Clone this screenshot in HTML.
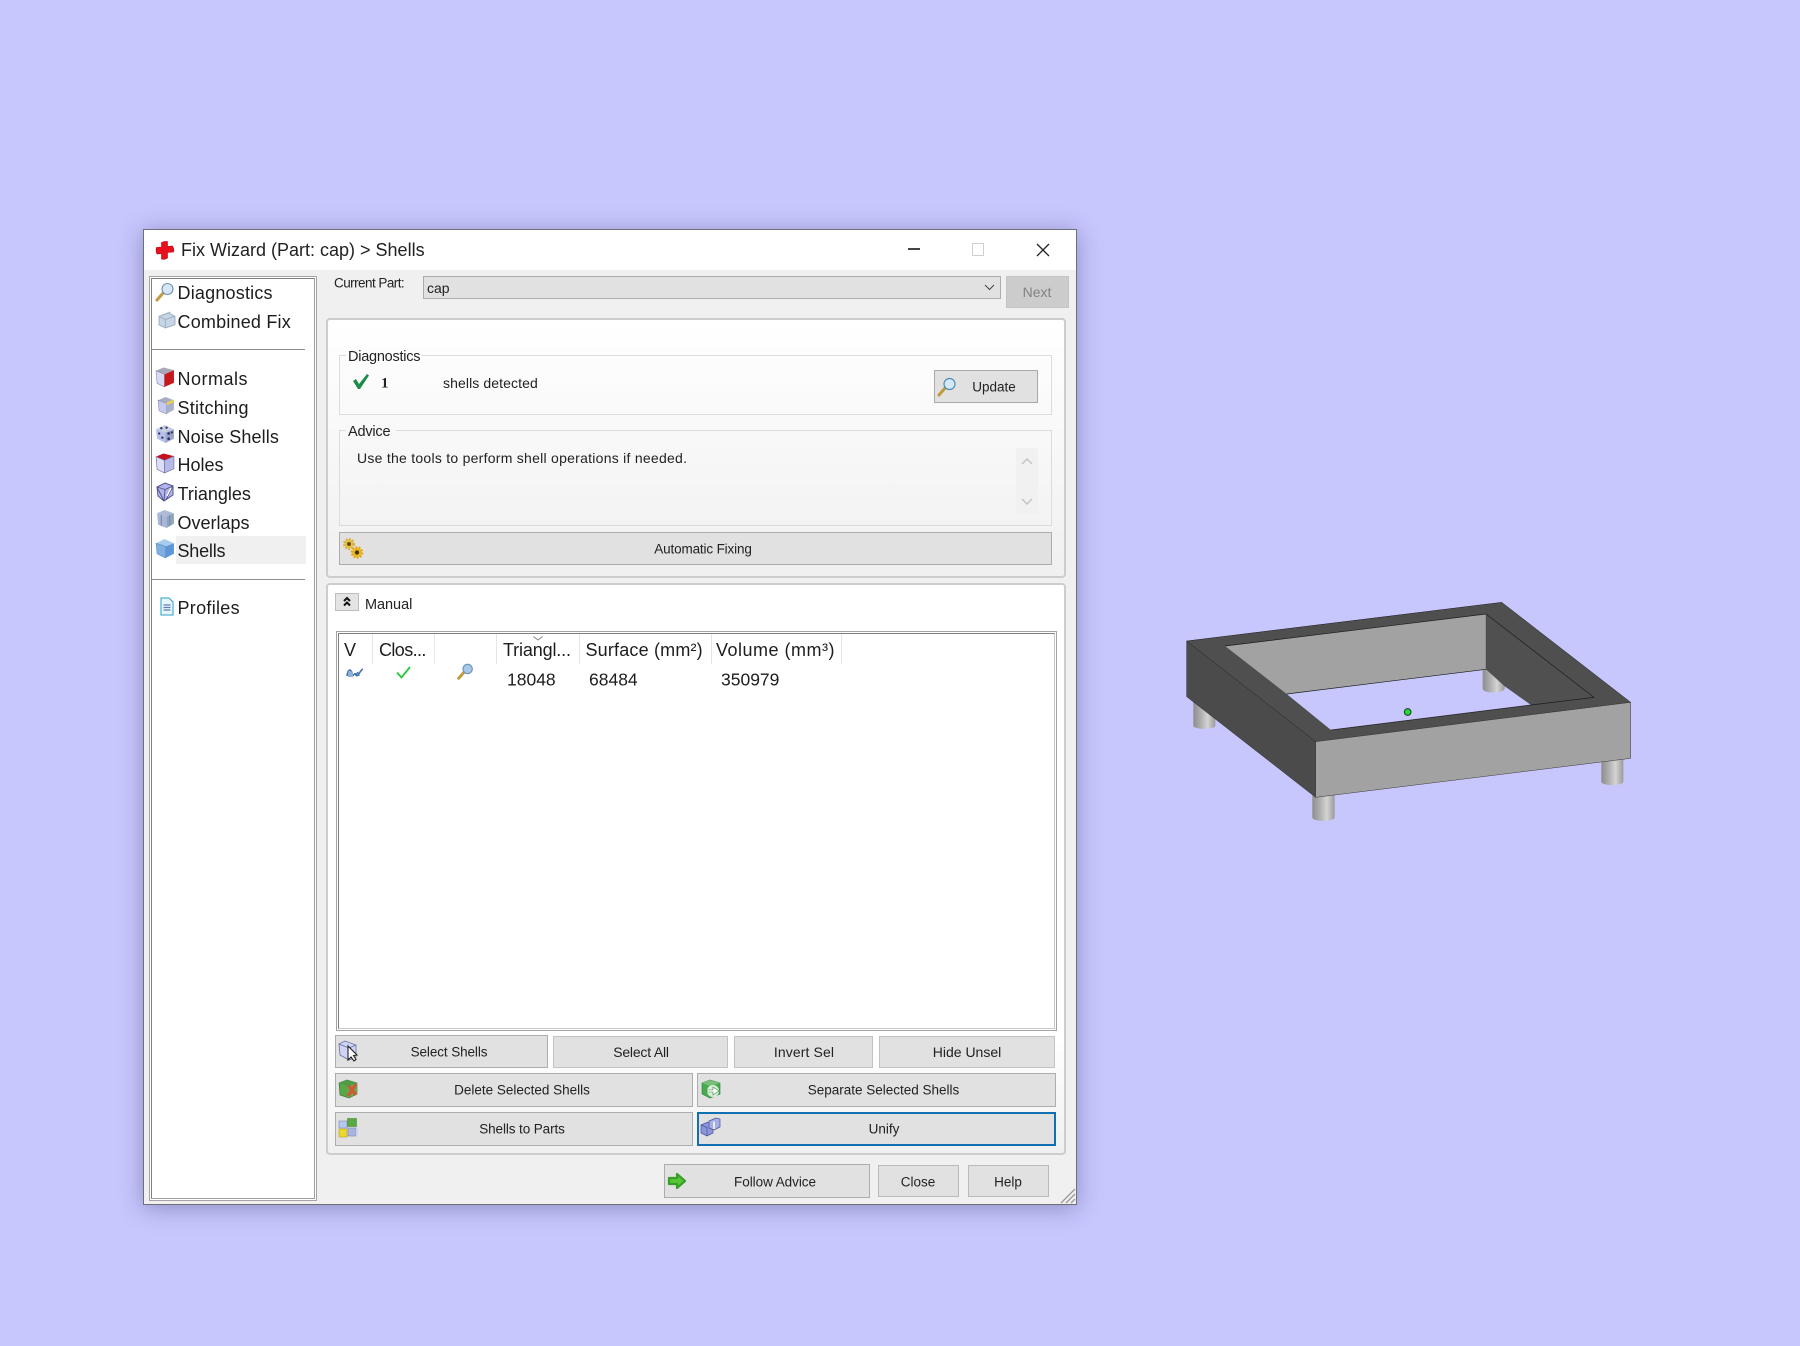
<!DOCTYPE html>
<html><head><meta charset="utf-8"><title>Fix Wizard</title>
<style>
html,body{margin:0;padding:0;width:1800px;height:1346px;overflow:hidden;background:#c7c7fe;font-family:"Liberation Sans",sans-serif;color:#222}
.a{position:absolute;box-sizing:border-box}
.t{position:absolute;white-space:nowrap;line-height:1;transform:translateY(-50%)}
.c{position:absolute;white-space:nowrap;line-height:1;transform:translate(-50%,-50%)}
.s{font-size:18px;color:#1d1d1d}
.m{font-size:14px}
.b{position:absolute;box-sizing:border-box;background:#e1e1e1;border:1px solid #adadad}
.g{position:absolute;box-sizing:border-box;border:1px solid #dcdcdc}
.p{position:absolute;box-sizing:border-box;border:2px solid #cdcdcd;border-radius:4px;background:linear-gradient(#fff,#f0f0f0)}
svg.i{position:absolute;overflow:visible}
.sep{position:absolute;top:634px;width:1px;height:30px;background:#e6e6e6}
</style></head><body>

<!-- window -->
<div class="a" style="left:143px;top:229px;width:934px;height:976px;background:#f0f0f0;border:1px solid #6f6f78;box-shadow:0 3px 22px rgba(40,40,90,.36)"></div>
<div class="a" style="left:144px;top:230px;width:932px;height:40px;background:#fff"></div>

<!-- title -->
<svg class="i" style="left:155px;top:240px" width="20" height="20" viewBox="0 0 19 20"><path d="M6 2.500Q9 1 12 1.500V6.500L17 6Q19 9 18 12L12 12.500V18Q9 20 6 19V13.500L1.500 14Q0 11 1 7.500L6 7z" fill="#e8101a" stroke="#c00010" stroke-width=".6"/></svg>
<div class="t" style="left:181px;top:250px;font-size:18px;color:#222">Fix Wizard (Part: cap) &gt; Shells</div>
<div class="a" style="left:908px;top:248px;width:12px;height:2px;background:#444"></div>
<div class="a" style="left:972px;top:243px;width:12px;height:13px;border:1px solid #d0d0d0"></div>
<svg class="i" style="left:1036px;top:243px" width="14" height="14"><path d="M1 1L13 13M13 1L1 13" stroke="#222" stroke-width="1.300" fill="none"/></svg>

<!-- sidebar -->
<div class="a" style="left:149px;top:276px;width:168px;height:925px;background:#fff;border:1px solid #a4a4a4"></div>
<div class="a" style="left:151px;top:278px;width:164px;height:921px;background:#fff;border:1px solid;border-color:#808080 #a0a0a0 #a0a0a0 #808080"></div>
<div class="a" style="left:152px;top:349px;width:153px;height:1px;background:#8c8c8c"></div>
<div class="a" style="left:152px;top:579px;width:153px;height:1px;background:#8c8c8c"></div>
<div class="a" style="left:176px;top:536px;width:130px;height:28px;background:#f0f0f0"></div>

<div class="t s" style="left:177.500px;top:293px;letter-spacing:.2px">Diagnostics</div>
<div class="t s" style="left:177.500px;top:322px;letter-spacing:.2px">Combined Fix</div>
<div class="t s" style="left:177.500px;top:379px;letter-spacing:.5px">Normals</div>
<div class="t s" style="left:177.500px;top:408px;letter-spacing:.25px">Stitching</div>
<div class="t s" style="left:177.500px;top:436.500px;letter-spacing:.12px">Noise Shells</div>
<div class="t s" style="left:177.500px;top:465px">Holes</div>
<div class="t s" style="left:177.500px;top:494px">Triangles</div>
<div class="t s" style="left:177.500px;top:522.500px">Overlaps</div>
<div class="t s" style="left:177.500px;top:551px;letter-spacing:-.2px">Shells</div>
<div class="t s" style="left:177.500px;top:608px;letter-spacing:.3px">Profiles</div>

<!-- sidebar icons -->
<svg class="i" style="left:155px;top:282px" width="20" height="20" viewBox="0 0 20 20"><path d="M2 18L9 10" stroke="#c29c44" stroke-width="3" stroke-linecap="round"/><circle cx="12.500" cy="7" r="5.500" fill="#d6e8f8" stroke="#6e90ae" stroke-width="1.100"/></svg>
<svg class="i" style="left:158px;top:311px" width="18" height="18" viewBox="0 0 17 17"><path d="M1 5L10 2L16 5V13L7 16L1 13z" fill="#c6d6e6" stroke="#a0b2c4"/><path d="M1 5L7 8V16M7 8L16 5" stroke="#a0b2c4" fill="none"/><path d="M4 3.500L12 1" stroke="#aebccb"/></svg>

<svg class="i" style="left:155px;top:367px" width="20" height="20" viewBox="0 0 19 19"><path d="M1 3.500L8 .5L18 3L9 7z" fill="#a8a8b8"/><path d="M1 3.500L9 7V19L2 15.500z" fill="#d9dbf6" stroke="#8a8bac" stroke-width=".6"/><path d="M9 7L18 3V15L9 19z" fill="#c8181c"/></svg>
<svg class="i" style="left:157px;top:396px" width="18" height="19" viewBox="0 0 17 18"><path d="M1 4L8 1L16 4L9 7z" fill="#a8acc4"/><path d="M1 4L9 7V17L2 14z" fill="#c6caf2" stroke="#8a8bac" stroke-width=".6"/><path d="M9 7L16 4V13L9 17z" fill="#aab1c8"/><path d="M9 7.500L16 4.500" stroke="#ecd24a" stroke-width="2.200"/></svg>
<svg class="i" style="left:155px;top:424px" width="20" height="20" viewBox="0 0 19 19"><path d="M1 5L9 1L18 5L10 8z" fill="#c9cde0"/><path d="M1 5L10 8V18L2 14z" fill="#b9c0e8"/><path d="M10 8L18 5V14L10 18z" fill="#9aa5c9"/><g fill="#2c3560"><circle cx="6" cy="4" r="1.100"/><circle cx="11" cy="3.500" r="1.100"/><circle cx="4" cy="9" r="1.100"/><circle cx="7" cy="13" r="1.100"/><circle cx="13" cy="9" r="1.300"/><circle cx="16" cy="8" r="1.100"/><circle cx="13" cy="14" r="1.300"/></g></svg>
<svg class="i" style="left:155px;top:453px" width="20" height="20" viewBox="0 0 19 19"><path d="M1 3.500L8 .5L18 3L9 7z" fill="#c8101c"/><path d="M1 3.500L9 7V19L2 15.500z" fill="#dcddf9" stroke="#6e6f96" stroke-width=".6"/><path d="M9 7L18 3V15L9 19z" fill="#b6baea" stroke="#6e6f96" stroke-width=".6"/></svg>
<svg class="i" style="left:156px;top:482px" width="18" height="20" viewBox="0 0 18 20"><path d="M1 5L9 1L17 4V13L8 19L2 14z" fill="#b2b4ea" stroke="#50548c"/><path d="M1 5L9 7.500L17 4M9 7.500L8 19M1 5L8 19M17 4L10 18" stroke="#50548c" fill="none" stroke-width=".9"/><path d="M11 14L15 6" stroke="#fff" stroke-width="1.300"/></svg>
<svg class="i" style="left:156px;top:509px" width="19" height="20" viewBox="0 0 18 19"><path d="M1 4L8 1L17 4L10 7z" fill="#aebbd4"/><path d="M1 4L10 7V18L2 15z" fill="#a9b5d9"/><path d="M10 7L17 4V14L10 18z" fill="#8fa6bb"/><path d="M5 5.500V16M13 5.500V16" stroke="#7788a8"/></svg>
<svg class="i" style="left:155px;top:538px" width="20" height="21" viewBox="0 0 19 20"><path d="M1 5L9 1L18 5L10 8z" fill="#a8ccec"/><path d="M1 5L10 8V19L2 15z" fill="#7fb0e2" stroke="#5d8fc4" stroke-width=".6"/><path d="M10 8L18 5V15L10 19z" fill="#5f97d6"/></svg>
<svg class="i" style="left:160px;top:597px" width="14" height="19" viewBox="0 0 14 19"><path d="M1 1H9L13 5V18H1z" fill="#e8f6fc" stroke="#2aa0c4"/><path d="M3.500 8H10.500M3.500 10.500H10.500M3.500 13H10.500" stroke="#5d7db4" stroke-width="1.300"/></svg>

<!-- current part -->
<div class="t" style="left:334px;top:283px;font-size:13.500px;letter-spacing:-.55px">Current Part:</div>
<div class="b" style="left:423px;top:276px;width:578px;height:23px"></div>
<div class="t m" style="left:427px;top:287.500px">cap</div>
<svg class="i" style="left:984px;top:284px" width="11" height="7"><path d="M1 1L5.500 5.500L10 1" stroke="#444" fill="none"/></svg>
<div class="b" style="left:1006px;top:276px;width:63px;height:32px;background:#ccc;border-color:#c4c4c4"></div>
<div class="c" style="left:1037px;top:292px;font-size:14px;color:#838383">Next</div>

<!-- panel 1 -->
<div class="p" style="left:326px;top:318px;width:740px;height:260px"></div>
<div class="g" style="left:339px;top:355px;width:713px;height:60px"></div>
<div class="a" style="left:346px;top:350px;width:76px;height:10px;background:#fdfdfd"></div>
<div class="t" style="left:348px;top:357px;font-size:14.500px;letter-spacing:-.25px">Diagnostics</div>
<svg class="i" style="left:352px;top:373px" width="18" height="17" viewBox="0 0 18 17"><path d="M1 8L4 6L7 11L15 1L17 2.500L8 16H6z" fill="#1f8a4a"/></svg>
<div class="t" style="left:381px;top:384px;font-size:15px;font-weight:bold;font-family:'Liberation Serif',serif">1</div>
<div class="t m" style="left:443px;top:383px;letter-spacing:.1px">shells detected</div>
<div class="b" style="left:934px;top:370px;width:104px;height:33px;border-color:#a9a9a9"></div>
<svg class="i" style="left:937px;top:377px" width="20" height="20" viewBox="0 0 20 20"><path d="M2 18L9 10" stroke="#c09a3c" stroke-width="3" stroke-linecap="round"/><circle cx="12.500" cy="7" r="5.500" fill="#d4e8f8" stroke="#4f8bb4" stroke-width="1.200"/></svg>
<div class="c" style="left:994px;top:387px;font-size:13.500px">Update</div>

<div class="g" style="left:339px;top:430px;width:713px;height:96px"></div>
<div class="a" style="left:346px;top:425px;width:50px;height:10px;background:#f8f8f8"></div>
<div class="t" style="left:348px;top:431.500px;font-size:14.500px;letter-spacing:-.2px">Advice</div>
<div class="t" style="left:357px;top:458px;font-size:14px;letter-spacing:.26px">Use the tools to perform shell operations if needed.</div>
<div class="a" style="left:1016px;top:448px;width:22px;height:66px;background:#f1f1f1"></div>
<svg class="i" style="left:1021px;top:458px" width="12" height="8"><path d="M1 6L6 1L11 6" stroke="#c4c4c4" stroke-width="1.500" fill="none"/></svg>
<svg class="i" style="left:1021px;top:498px" width="12" height="8"><path d="M1 1L6 6L11 1" stroke="#c4c4c4" stroke-width="1.500" fill="none"/></svg>

<div class="b" style="left:339px;top:532px;width:713px;height:33px"></div>
<svg class="i" style="left:342px;top:537px" width="22" height="23" viewBox="0 0 22 23"><circle cx="7" cy="7" r="4.500" fill="#e8c848" stroke="#d8b040" stroke-width="3" stroke-dasharray="1.800 1.200"/><circle cx="7" cy="7" r="2" fill="#6a4a10"/><circle cx="15" cy="15.500" r="4.800" fill="#f0c020" stroke="#e2a818" stroke-width="3" stroke-dasharray="1.800 1.200"/><circle cx="15" cy="15.500" r="2.200" fill="#4a3008"/></svg>
<div class="c" style="left:703px;top:549px;font-size:13.500px;letter-spacing:-.15px">Automatic Fixing</div>

<!-- panel 2 -->
<div class="p" style="left:326px;top:583px;width:740px;height:572px;background:linear-gradient(#fff 0,#fff 80%,#f0f0f0 100%)"></div>
<div class="b" style="left:335px;top:593px;width:24px;height:18px;background:#e4e4e4;border-color:#bdbdbd"></div>
<svg class="i" style="left:342px;top:596px" width="10" height="11"><path d="M2 5L5 2L8 5M2 9.500L5 6.500L8 9.500" stroke="#111" stroke-width="2" fill="none"/></svg>
<div class="t" style="left:365px;top:605px;font-size:14.500px;letter-spacing:-.05px">Manual</div>

<!-- table -->
<div class="a" style="left:336px;top:631px;width:721px;height:400px;background:#fff;border:1px solid #a4a4a4"></div>
<div class="a" style="left:338px;top:633px;width:717px;height:396px;border:1px solid;border-color:#808080 #c8c8c8 #c8c8c8 #808080"></div>
<div class="sep" style="left:372px"></div><div class="sep" style="left:434px"></div><div class="sep" style="left:496px"></div><div class="sep" style="left:579px"></div><div class="sep" style="left:711px"></div><div class="sep" style="left:841px"></div>
<svg class="i" style="left:533px;top:636px" width="10" height="5"><path d="M.5 .5L5 4L9.500 .5" stroke="#888" fill="none"/></svg>
<div class="t s" style="left:344px;top:650px">V</div>
<div class="t s" style="left:379px;top:650px;letter-spacing:-.6px">Clos...</div>
<div class="t s" style="left:503px;top:650px;letter-spacing:-.15px">Triangl...</div>
<div class="t s" style="left:585.500px;top:650px;letter-spacing:.18px">Surface (mm²)</div>
<div class="t s" style="left:716px;top:650px;letter-spacing:.5px">Volume (mm³)</div>
<div class="t s" style="left:507px;top:680px;font-size:17.500px">18048</div>
<div class="t s" style="left:589px;top:680px;font-size:17.500px">68484</div>
<div class="t s" style="left:721px;top:680px;font-size:17.500px">350979</div>
<svg class="i" style="left:346px;top:667px" width="18" height="12" viewBox="0 0 18 12"><path d="M1 9C2 2 5 1 6 7C7 11 9 4 10 8C12 11 14 3 17 2" stroke="#3f72ac" stroke-width="1.600" fill="none"/><path d="M2 4.500H7V10H2z" fill="#8fb0d8"/><path d="M10 9C11 5 12 4 13 9" stroke="#3f72ac" stroke-width="1.200" fill="none"/></svg>
<svg class="i" style="left:396px;top:666px" width="15" height="13"><path d="M1 6.500L5.500 11.500L14 1" stroke="#28c83c" stroke-width="1.800" fill="none"/></svg>
<svg class="i" style="left:457px;top:663px" width="17" height="17" viewBox="0 0 20 20"><path d="M2 18L9 10" stroke="#c09a3c" stroke-width="3.500" stroke-linecap="round"/><circle cx="12.500" cy="7" r="5.500" fill="#a8c8e8" stroke="#6c94b8" stroke-width="1.400"/></svg>

<!-- buttons -->
<div class="b" style="left:335px;top:1035px;width:213px;height:33px"></div>
<div class="c m" style="left:449px;top:1051.500px;font-size:13.500px;letter-spacing:-.1px">Select Shells</div>
<div class="b" style="left:553px;top:1036px;width:175px;height:32px;border-color:#c2c2c2"></div>
<div class="c m" style="left:641px;top:1052px;letter-spacing:-.2px">Select All</div>
<div class="b" style="left:734px;top:1036px;width:139px;height:32px;border-color:#c2c2c2"></div>
<div class="c m" style="left:804px;top:1052px;letter-spacing:.1px">Invert Sel</div>
<div class="b" style="left:879px;top:1036px;width:176px;height:32px;border-color:#c2c2c2"></div>
<div class="c m" style="left:967px;top:1052px">Hide Unsel</div>

<div class="b" style="left:335px;top:1073px;width:358px;height:34px"></div>
<div class="c m" style="left:522px;top:1090px;font-size:13.500px">Delete Selected Shells</div>
<div class="b" style="left:697px;top:1073px;width:359px;height:34px"></div>
<div class="c m" style="left:883.500px;top:1090px;font-size:13.500px">Separate Selected Shells</div>
<div class="b" style="left:335px;top:1112px;width:358px;height:34px"></div>
<div class="c m" style="left:522px;top:1129px;font-size:13.500px;letter-spacing:-.1px">Shells to Parts</div>
<div class="b" style="left:697px;top:1112px;width:359px;height:34px;border:2px solid #1070b4"></div>
<div class="c m" style="left:884px;top:1129px;font-size:13.500px">Unify</div>

<svg class="i" style="left:338px;top:1040px" width="21" height="22" viewBox="0 0 21 22"><path d="M1 4L7 1L18 5V17L11 20L2 15z" fill="#cfd4f6" stroke="#6a6f9c" stroke-width=".8"/><path d="M1 4L11 8V20M11 8L18 5" stroke="#6a6f9c" fill="none" stroke-width=".8"/><path d="M10 6V20L13 17L16 21L18 19.500L15.500 15.500L19 15z" fill="#fff" stroke="#222" stroke-width="1.100"/></svg>
<svg class="i" style="left:338px;top:1079px" width="20" height="20" viewBox="0 0 20 20"><path d="M1 4L9 1L19 4V15L11 19L2 16z" fill="#58a848" stroke="#3a6a38" stroke-width=".6"/><path d="M9 8L19 4V15L10 19z" fill="#6ea84e"/><path d="M10 6L18 16M18 5L10 17" stroke="#cc5a34" stroke-width="3.200"/><path d="M1 4L9 7L19 4L9 1z" fill="#4e9c48"/></svg>
<svg class="i" style="left:701px;top:1079px" width="20" height="20" viewBox="0 0 20 20"><path d="M1 4L9 1L19 4V15L9 19L1 15z" fill="#48aa50" stroke="#2e8038" stroke-width=".6"/><path d="M1 4L9 7L19 4L9 1z" fill="#78c078"/><circle cx="12" cy="12" r="6" fill="#d8ecd8"/><path d="M6 11H12V8L18 12L12 16V13H6z" fill="#fff" stroke="#3a8c40" stroke-width=".6"/></svg>
<svg class="i" style="left:338px;top:1118px" width="20" height="20" viewBox="0 0 20 20"><rect x="1" y="3" width="8" height="7" fill="#b4c8f0" stroke="#7c8cb0" stroke-width=".6"/><rect x="9.500" y="0.500" width="9" height="8" fill="#58a844" stroke="#4a8a3c" stroke-width=".6"/><rect x="1" y="11" width="8" height="8" fill="#ecd82c" stroke="#b8a420" stroke-width=".6"/><rect x="10" y="10" width="8" height="8" fill="#aab4e4" stroke="#7c8cb0" stroke-width=".6"/><path d="M18 10L20 9V16L18 18z" fill="#ccd2f0"/></svg>
<svg class="i" style="left:700px;top:1117px" width="21" height="20" viewBox="0 0 21 20"><path d="M1 8L8 5L13 7V16L7 19L1 16z" fill="#8c96dc" stroke="#4c5490" stroke-width=".7"/><path d="M1 8L7 10.500V19" stroke="#4c5490" fill="none" stroke-width=".7"/><path d="M9 4L16 1L20 2V10L14 13L9 11z" fill="#a4aee4" stroke="#4c5490" stroke-width=".7"/><path d="M14 4.500V12" stroke="#fff" stroke-width="1.500"/></svg>

<div class="b" style="left:664px;top:1164px;width:206px;height:34px"></div>
<svg class="i" style="left:667px;top:1171px" width="20" height="20" viewBox="0 0 20 20"><path d="M2 7H10V3L18 10L10 17V13H2z" fill="#56c634" stroke="#38a028" stroke-width="2.200" stroke-linejoin="round"/></svg>
<div class="c m" style="left:775px;top:1181.500px;font-size:13.500px;letter-spacing:-.05px">Follow Advice</div>
<div class="b" style="left:878px;top:1165px;width:81px;height:32px;border-color:#bababa"></div>
<div class="c m" style="left:918px;top:1181.500px;font-size:13.500px">Close</div>
<div class="b" style="left:968px;top:1165px;width:81px;height:32px;border-color:#bababa"></div>
<div class="c m" style="left:1008px;top:1181.500px;font-size:13.500px">Help</div>
<svg class="i" style="left:1060px;top:1188px" width="16" height="16"><path d="M1 15L15 1M6 15L15 6M11 15L15 11" stroke="#9a9a9a" stroke-width="1.300"/></svg>

<!-- 3D model -->
<svg class="i" style="left:1170px;top:580px" width="480" height="260" viewBox="0 0 1440 780">
<defs><linearGradient id="leg" x1="0" x2="1" y1="0" y2="0"><stop offset="0" stop-color="#8d8d8d"/><stop offset=".35" stop-color="#b0b0b0"/><stop offset=".65" stop-color="#d4d4d4"/><stop offset="1" stop-color="#9a9a9a"/></linearGradient></defs>
<g stroke="none" fill="url(#leg)">
<path d="M70 350H136V437C136 450 70 450 70 437z"/>
<path d="M427 645H494V712C494 726 427 726 427 712z"/>
<path d="M1294 535H1360V605C1360 619 1294 619 1294 605z"/>
</g>
<path d="M50 183L995 67L1382 367L437 485z" fill="#4f4f4f" stroke="#1c1c1c" stroke-width="1.500"/>
<path d="M50 183L437 485V652L50 350z" fill="#4b4b4b" stroke="#2a2a2a" stroke-width="1.500"/>
<path d="M437 485L1382 367V535L437 652z" fill="#a2a2a2" stroke="#3a3a3a" stroke-width="1.500"/>
<path d="M350 342L948 268L1083 375L483 450z" fill="#c7c7fe"/>
<path d="M938 260H1004V325C1004 342 938 342 938 325z" fill="url(#leg)"/>
<path d="M165 198L948 102V268L350 342z" fill="#a2a2a2"/>
<path d="M948 102L1272 352L1083 375L1003 318L948 268z" fill="#505050"/>
<path d="M350 342L948 268M165 198L948 102" stroke="#1c1c1c" stroke-width="2" fill="none"/>
<path d="M948 102L1272 352L1083 375" stroke="#1c1c1c" stroke-width="2" fill="none"/>
<path d="M483 450L1083 375" stroke="#222" stroke-width="2" fill="none"/>
<path d="M948 102V268" stroke="#333" stroke-width="1" fill="none"/>
<circle cx="713" cy="396" r="10" fill="#22d83a" stroke="#1a3a1a" stroke-width="3"/>
</svg>
</body></html>
